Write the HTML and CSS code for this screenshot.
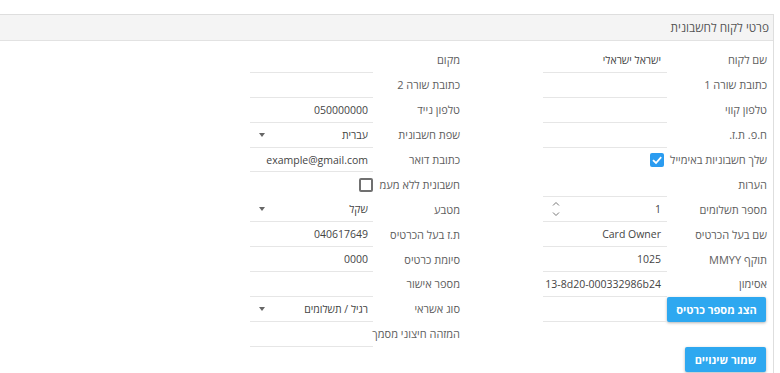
FILE: index.html
```html
<!DOCTYPE html>
<html lang="he" dir="rtl">
<head>
  <meta charset="UTF-8">
  <title>פרטי לקוח לחשבונית</title>
  <link rel="stylesheet" href="styles.css">
</head>
<body>
  <div class="panel">
    <div class="panel-head">פרטי לקוח לחשבונית</div>
    <div class="form">
      <div class="group group-main">
        <div class="lbl">שם לקוח</div><div class="fld">ישראל ישראלי</div>
        <div class="lbl">כתובת שורה 1</div><div class="fld"></div>
        <div class="lbl">טלפון קווי</div><div class="fld"></div>
        <div class="lbl">ח.פ. ת.ז.</div><div class="fld"></div>
        <div class="lbl wide"><span>שלך חשבוניות באימייל</span><span class="check on"><svg viewBox="0 0 14 14" width="14" height="14"><path d="M3 7.2 L6 10 L11.2 4.2" fill="none" stroke="#fff" stroke-width="1.8"/></svg></span></div>
        <div class="lbl">הערות</div><div class="fld"></div>
        <div class="lbl">מספר תשלומים</div><div class="fld num">1<span class="spin"><svg viewBox="0 0 8 16" width="8" height="16"><path d="M1 4.5 L4 1.5 L7 4.5 M1 11.5 L4 14.5 L7 11.5" fill="none" stroke="#777" stroke-width="1"/></svg></span></div>
        <div class="lbl">שם בעל הכרטיס</div><div class="fld">Card Owner</div>
        <div class="lbl">תוקף MMYY</div><div class="fld">1025</div>
        <div class="lbl">אסימון</div><div class="fld">13-8d20-000332986b24</div>
        <div class="lbl"><button class="btn btn-card">הצג מספר כרטיס</button></div><div class="fld"></div>
      </div>
      <div class="group group-side">
        <div class="lbl">מקום</div><div class="fld"></div>
        <div class="lbl">כתובת שורה 2</div><div class="fld"></div>
        <div class="lbl">טלפון נייד</div><div class="fld">050000000</div>
        <div class="lbl">שפת חשבונית</div><div class="fld select">עברית</div>
        <div class="lbl">כתובת דואר</div><div class="fld">example@gmail.com</div>
        <div class="lbl wide"><span>חשבונית ללא מעמ</span><span class="check"></span></div>
        <div class="lbl">מטבע</div><div class="fld select">שקל</div>
        <div class="lbl">ת.ז בעל הכרטיס</div><div class="fld">040617649</div>
        <div class="lbl">סיומת כרטיס</div><div class="fld">0000</div>
        <div class="lbl">מספר אישור</div><div class="fld"></div>
        <div class="lbl">סוג אשראי</div><div class="fld select">רגיל / תשלומים</div>
        <div class="lbl">המזהה חיצוני מסמך</div><div class="fld"></div>
      </div>
    </div>
    <div class="actions">
      <button class="btn btn-save">שמור שינויים</button>
    </div>
  </div>
</body>
</html>
```

FILE: styles.css
```css
* {
  box-sizing: border-box;
}
body {
  margin: 0;
  font-family: "Open Sans", "Liberation Sans", sans-serif;
  font-size: 11px;
  color: #555;
  background: #fff;
}

.panel {
  margin: 14px auto 0 0;
  width: 774px;
  min-height: 359px;
  border-top: 1px solid #dedede;
  border-right: 1px solid #dedede;
}
.panel-head {
  height: 26px;
  line-height: 25px;
  padding-right: 4px;
  background: #f4f4f4;
  border-bottom: 1px solid #e2e2e2;
  font-size: 11.8px;
  color: #555;
}

.form {
  display: flex;
  gap: 83px;
  padding-top: 7px;
  padding-right: 6px;
}
.group {
  display: grid;
  grid-auto-rows: 24.9px;
}
.group-main {
  grid-template-columns: 100px 124px;
}
.group-side {
  grid-template-columns: 87px 123px;
}

.lbl {
  display: flex;
  align-items: center;
  line-height: 24px;
  white-space: nowrap;
  color: #5e5e5e;
}
.lbl.wide {
  grid-column: span 2;
  gap: 6px;
}
.fld {
  display: flex;
  align-items: center;
  padding: 0 6px 0 4px;
  border-bottom: 1px solid #e6e6e6;
  color: #444;
  font-size: 10.5px;
  white-space: nowrap;
}
.group-side .fld {
  padding-right: 5px;
}
.fld.num,
.fld.select {
  justify-content: space-between;
}
.fld.select::after {
  content: "";
  margin-left: 5px;
  border-top: 4px solid #666;
  border-left: 3.5px solid transparent;
  border-right: 3.5px solid transparent;
}
.spin {
  display: flex;
  margin-left: 5px;
}

.check {
  display: inline-flex;
  align-items: center;
  justify-content: center;
  width: 14px;
  height: 14px;
  border: 2px solid #707070;
  border-radius: 2px;
}
.check.on {
  border: none;
  background: #2b9cf0;
}

.btn {
  border: none;
  border-radius: 2px;
  background: #2ea8f0;
  color: #fff;
  font-family: inherit;
  font-size: 11px;
  font-weight: bold;
  height: 25px;
  padding: 0;
  box-shadow: 0 1px 3px rgba(0, 0, 0, 0.3);
  cursor: pointer;
}
.btn-card {
  width: 99px;
  margin-right: 1px;
}
.actions {
  display: flex;
  padding: 0 7px 0 0;
}
.btn-save {
  width: 81px;
}
```
